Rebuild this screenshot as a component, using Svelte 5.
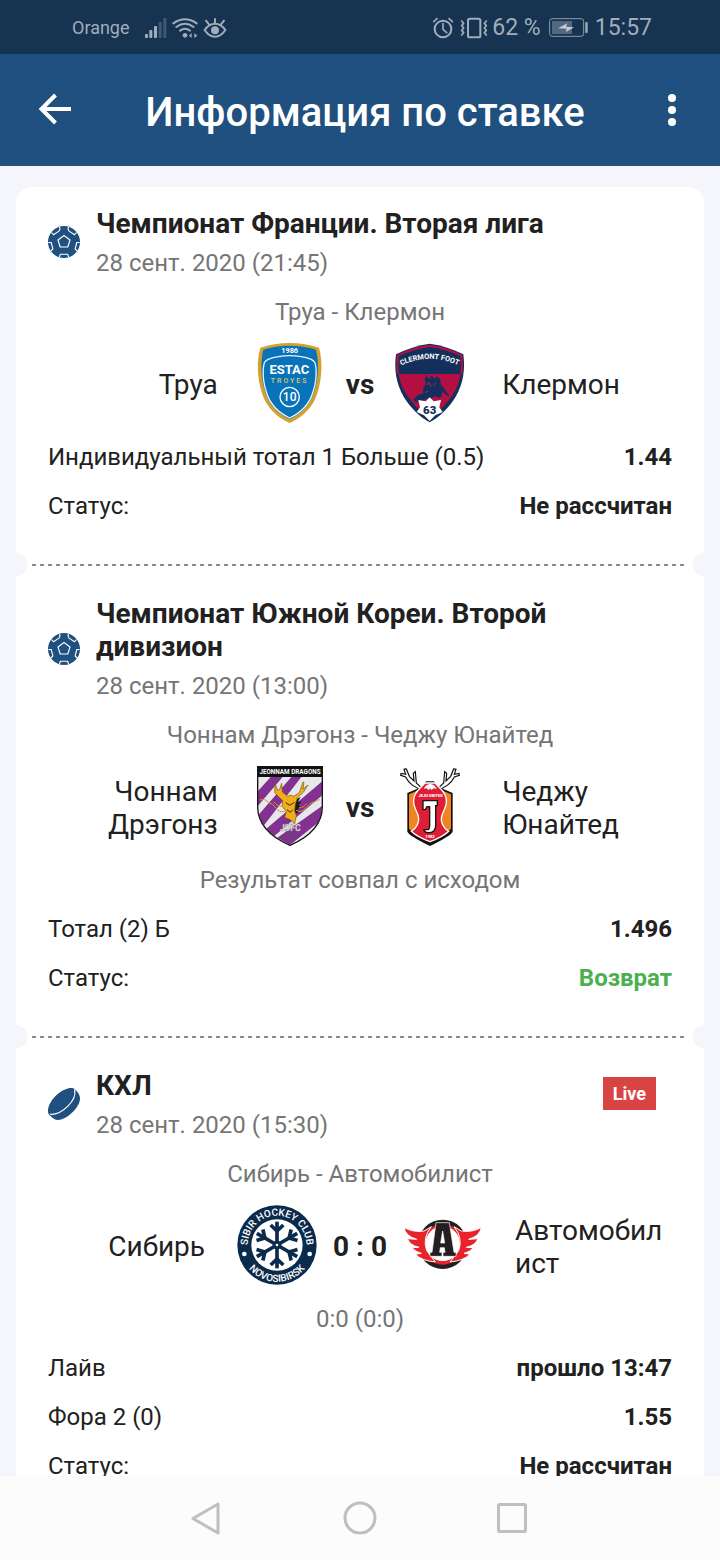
<script>
  const bets = [
    {
      sport: 'football',
      league: 'Чемпионат Франции. Вторая лига',
      date: '28 сент. 2020 (21:45)',
      match: 'Труа - Клермон',
      home: 'Труа',
      away: 'Клермон',
      homeLogo: 'troyes',
      awayLogo: 'clermont',
      score: 'vs',
      rows: [
        { label: 'Индивидуальный тотал 1 Больше (0.5)', value: '1.44' },
        { label: 'Статус:', value: 'Не рассчитан' }
      ]
    },
    {
      sport: 'football',
      league: 'Чемпионат Южной Кореи. Второй дивизион',
      date: '28 сент. 2020 (13:00)',
      match: 'Чоннам Дрэгонз - Чеджу Юнайтед',
      home: 'Чоннам Дрэгонз',
      away: 'Чеджу Юнайтед',
      homeLogo: 'jeonnam',
      awayLogo: 'jeju',
      score: 'vs',
      note: 'Результат совпал с исходом',
      rows: [
        { label: 'Тотал (2) Б', value: '1.496' },
        { label: 'Статус:', value: 'Возврат', good: true }
      ]
    },
    {
      sport: 'hockey',
      live: true,
      league: 'КХЛ',
      date: '28 сент. 2020 (15:30)',
      match: 'Сибирь - Автомобилист',
      home: 'Сибирь',
      away: 'Автомобилист',
      homeLogo: 'sibir',
      awayLogo: 'avto',
      score: '0 : 0',
      note: '0:0 (0:0)',
      rows: [
        { label: 'Лайв', value: 'прошло 13:47' },
        { label: 'Фора 2 (0)', value: '1.55' },
        { label: 'Статус:', value: 'Не рассчитан' }
      ]
    }
  ];
</script>

{#snippet sportIcon(kind)}
  {#if kind === 'football'}
    <svg class="sport" viewBox="0 0 32 32" aria-hidden="true">
      <circle cx="16" cy="16" r="16" fill="#20507f" />
      <g fill="none" stroke="#fff" stroke-width="1.1" stroke-linejoin="round">
        <path d="M16 9.5l6 4.5-2.200 7h-7.600L10 14z" />
        <path d="M3.500 6.500l2 2.200 5.500-3.600 1-2.600-.6-1.600" />
        <path d="M28.500 6.500l-2 2.200-5.500-3.600-1-2.600.6-1.600" />
        <path d="M.4 16.500h2.800l1.700 6.500-2.200 2" />
        <path d="M31.600 16.500h-2.800l-1.700 6.500 2.200 2" />
        <path d="M11.500 31.200l.8-3h7.400l.8 3" />
      </g>
    </svg>
  {:else}
    <svg class="sport" viewBox="0 0 32 32" aria-hidden="true">
      <path d="M20 0.500c3-.8 6-.6 7.500 1.500 2.500 2 4.500 5 4.500 8.500C32 20 18 32 10 32 7 32 4.500 30 2.500 28 .8 26.500 0 25 0 23.500 0 13.500 11 2.500 20 .5z" fill="#20507f" />
      <path d="M26.500 1.500C29.500 12 14 27 2.200 26.300" fill="none" stroke="#fff" stroke-width="1.200" />
    </svg>
  {/if}
{/snippet}

{#snippet logo(kind)}
  {#if kind === 'troyes'}
    <svg class="logo" viewBox="30 39 240 240" role="img" aria-label="ESTAC Troyes">
      <path d="M149 39c-30 0-62 5-88 14-11 38-10 91 5 137 10 37 42 72 83 89 41-17 73-52 83-89 15-46 16-99 5-137-26-9-58-14-88-14z" fill="#d4a12c" />
      <path d="M149 47c-28 0-56 4-79 12-9 36-8 84 5 125 10 37 37 67 74 84 37-17 64-47 74-84 13-41 14-89 5-125-23-8-51-12-79-12z" fill="#0873b9" />
      <path d="M149 77c-24 0-46 4-65 11-12 7-12 11-14 27-2 26 2 50 9 71 10 34 36 62 70 78 34-16 60-44 70-78 7-21 11-45 9-71-2-16-2-20-14-27-19-7-41-11-65-11z" fill="#0873b9" stroke="#e8f5fc" stroke-width="4" />
      <text x="149" y="69" font-size="22" font-weight="700" fill="#fff" text-anchor="middle" font-family="Roboto, sans-serif">1986</text>
      <text x="148" y="132" font-size="39" font-weight="700" fill="#fff" text-anchor="middle" font-family="Roboto, sans-serif">ESTAC</text>
      <text x="149" y="159" font-size="21" letter-spacing="6" font-weight="500" fill="#d6cb72" text-anchor="middle" font-family="Roboto, sans-serif">TROYES</text>
      <circle cx="149" cy="201" r="29" fill="none" stroke="#fff" stroke-width="4" />
      <text x="149" y="214" font-size="36" font-weight="500" fill="#fff" text-anchor="middle" font-family="Roboto, sans-serif">10</text>
    </svg>
  {:else if kind === 'clermont'}
    <svg class="logo" viewBox="450 39 240 240" role="img" aria-label="Clermont Foot">
      <path d="M569 41c36 5 70 16 101 32 6 45 0 88-23 127-18 30-47 60-78 77-31-17-60-47-78-77-23-39-29-82-23-127 31-16 65-27 101-32z" fill="#13305c" />
      <path d="M569 44c36 5 68 15 98 31 2 20 2 38 0 57H471c-2-19-2-37 0-57 30-16 62-26 98-31z" fill="#b40f42" />
      <path d="M569 51c33 5 64 13 92 28 2 18 2 35 0 53H477c-2-18-2-35 0-53 28-15 59-23 92-28z" fill="#13305c" />
      <path d="M476 132h186c-5 31-18 57-36 79-16 21-35 40-57 55-22-15-41-34-57-55-18-22-31-48-36-79z" fill="#b40f42" />
      <path d="M519 209l16-15 15-4-1-14 8-14-3-16 6-6 10 8 6-10 9 9 4-9 11 8 3 19 8 8 17 30-21-19-3 16-8 4-11-7-12 9-16 1-10 7-14-2-4 6z" fill="#13305c" />
      <path d="M562 150l-4-15M576 148l-4-10M598 165l28 31" fill="none" stroke="#13305c" stroke-width="4" />
      <path d="M560 164l8-6 5 12M582 166l5-8M556 187l10-3" fill="none" stroke="#a9284f" stroke-width="3" />
      <path d="M569 202l12 12 22-4-5 22 10 14-22 10-17 17-17-17-22-10 10-14-5-22 22 4z" fill="#fff" />
      <path id="clermont-arc" d="M483 107q84-40 172-1" fill="none" />
      <text font-size="22" font-weight="700" fill="#fff" font-family="Roboto, sans-serif"><textPath href="#clermont-arc" startOffset="50%" text-anchor="middle">CLERMONT FOOT</textPath></text>
      <text x="569" y="252" font-size="34" font-weight="900" fill="#13305c" text-anchor="middle" font-family="Roboto, sans-serif">63</text>
    </svg>
  {:else if kind === 'jeonnam'}
    <svg class="logo" viewBox="30 33 240 240" role="img" aria-label="Jeonnam Dragons">
      <clipPath id="jeonnam-shield"><path d="M54 35h192v120q0 72-96 114-96-42-96-114z" /></clipPath>
      <g clip-path="url(#jeonnam-shield)">
        <path fill="#e6e8eb" d="M50 30h200v245H50z" />
        <path fill="#843092" d="M128 66H92l-45 50v44zM184 66h-30L50 186l18 30zM250 76L78 222l24 22L250 118zM250 150L112 248l38 22 100-80z" />
        <path fill="#111" d="M50 30h200v36H50z" />
      </g>
      <path d="M53 34h194v121q0 73-97 116-97-43-97-116z" fill="none" stroke="#151515" stroke-width="4" />
      <path d="M158 138l24-12-8 14 10 0-9 11 9 4-12 8 4 9-18 8z" fill="#181818" />
      <path d="M151 194l-17-7 5-17-13-17 2-16-24-24 1-28 8 21 6-3 6-18 2 26 16 13 9-4 9 4 17-11 11-32 3 1-3 20 15-12-14 22-17 15-7 20-2 20 5 15-5 24z" fill="#f0ae19" stroke="#785215" stroke-width="2" />
      <path d="M134 169c-23 8-30-24-46-25-10-9-18-14-28-9M168 166c24 14 31-18 48-23 12-3 14-8 23-9M128 154c-17 1-22-10-27-14M177 158c15-1 17-7 23-12" fill="none" stroke="#d99a1a" stroke-width="3" />
      <path d="M137 143l13 8 13-9M141 164l9 8 8-7" fill="none" stroke="#38250b" stroke-width="3" />
      <text x="150" y="57" font-size="19" font-weight="700" fill="#fff" text-anchor="middle" font-family="Roboto, sans-serif">JEONNAM DRAGONS</text>
      <text x="151" y="229" font-size="26" font-weight="700" fill="#fff" stroke="#777" stroke-width="1" text-anchor="middle" font-family="Roboto, sans-serif">JDFC</text>
      <text x="150" y="250" font-size="14" font-weight="700" fill="#555" text-anchor="middle" font-family="Roboto, sans-serif">1994</text>
    </svg>
  {:else if kind === 'jeju'}
    <svg class="logo" viewBox="450 33 240 240" role="img" aria-label="Jeju United">
      <path d="M551 105c-26-4-46-22-54-39l-15-5 1-6 14 3-5-15 7-1 9 22 14 14-2-23 6-5 3 34 17 16zM589 105c26-4 46-22 54-39l15-5-1-6-14 3 5-15-7-1-9 22-14 14 2-23-6-5-3 34-17 16z" fill="#fff" stroke="#111" stroke-width="3.500" />
      <path d="M558 79h24l12 16 44 19v116q-5 12-68 43-63-31-68-43V114l44-19z" fill="#111" />
      <path d="M507 118l34-15h58l34 15v102q-4 12-63 38-59-26-63-38z" fill="#f08423" />
      <path d="M555 84h30l14 14c32 30 19 56 9 77-12 26 6 48 18 54-11 11-31 22-56 31-25-9-45-20-56-31 12-6 30-28 18-54-10-21-23-47 9-77z" fill="#df1d35" stroke="#fff" stroke-width="4" />
      <path d="M551 101l8-10 11-5 11 4 10 11-10-1-6 5-5-5-5 6-4-6z" fill="#fff" />
      <path d="M549 137h43v15h-5v59q0 24-25 22-9-1-10-9h11q6 0 6-14v-55h-8l-5 9h-7z" fill="#fff" stroke="#151515" stroke-width="4" />
      <text x="572" y="126" font-size="12" font-weight="900" fill="#fff" text-anchor="middle" font-family="Roboto, sans-serif">JEJU UNITED</text>
      <text x="570" y="249" font-size="12" font-weight="900" fill="#fff" text-anchor="middle" font-family="Roboto, sans-serif">1982</text>
    </svg>
  {:else if kind === 'sibir'}
    <svg class="logo" viewBox="36 30 240 240" role="img" aria-label="Sibir Hockey Club Novosibirsk">
      <circle cx="156" cy="150" r="119" fill="#0b2b4c" />
      <circle cx="156" cy="150" r="77" fill="#fff" />
      <g stroke="#0b2b4c" fill="none">
        {#each [0, 60, 120, 180, 240, 300] as angle}
          <g transform={`rotate(${angle} 156 150)`}>
            <path d="M156 144V80" stroke-width="11" />
            <path d="M137 90l19 18 19-18" stroke-width="11" />
          </g>
        {/each}
      </g>
      <path d="M156 135l13 7.500v15L156 165l-13-7.500v-15z" fill="#0b2b4c" />
      <circle cx="156" cy="150" r="4" fill="#fff" />
      <circle cx="58" cy="177" r="7" fill="#fff" />
      <circle cx="254" cy="177" r="7" fill="#fff" />
      <path id="sibir-top" d="M71 173a88 88 0 1 1 170 0" fill="none" />
      <path id="sibir-bottom" d="M50 180a110 110 0 0 0 212 0" fill="none" />
      <g font-size="30" font-weight="500" fill="#fff" font-family="Roboto, sans-serif">
        <text><textPath href="#sibir-top" startOffset="50%" text-anchor="middle">SIBIR HOCKEY CLUB</textPath></text>
        <text><textPath href="#sibir-bottom" startOffset="50%" text-anchor="middle">NOVOSIBIRSK</textPath></text>
      </g>
    </svg>
  {:else}
    <svg class="logo" viewBox="9 -21 240 240" role="img" aria-label="Автомобилист">
      <circle cx="128" cy="97" r="74" fill="#231f20" />
      <circle cx="128" cy="97" r="61" fill="#e8232b" />
      <circle cx="128" cy="95" r="52" fill="#fff" />
      <g fill="#e8232b" stroke="#fff" stroke-width="3">
        <path id="avto-wing" d="M12 46Q38 62 72 57L94 44Q66 78 80 116L106 150Q64 146 46 127L64 124Q46 120 36 107L57 106Q30 100 22 80L50 82Q16 72 12 46z" />
        <use href="#avto-wing" transform="translate(256 0) scale(-1 1)" />
      </g>
      <path d="M108 32h40l14 89h6v12h-39v-12h6l-2-14h-12l-2 14h7v12H90v-12h6zM128 57l-6 36h12z" fill="#231f20" fill-rule="evenodd" stroke="#fff" stroke-width="2" />
    </svg>
  {/if}
{/snippet}

<div class="screen">
  <div class="status-bar">
    <div class="status-group left">
      <span class="carrier">Orange</span>
      <svg width="84" height="24" viewBox="252 45 252 72" aria-hidden="true">
        <g fill="#a2adb9">
          <rect x="255" y="99" width="9" height="12" rx="2" />
          <rect x="268" y="87" width="9" height="24" rx="2" />
          <rect x="282" y="75" width="9" height="36" rx="2" />
          <g opacity=".3"><rect x="296" y="63" width="9" height="48" rx="2" /><rect x="310" y="51" width="9" height="60" rx="2" /></g>
          <circle cx="375" cy="103" r="7" />
          <path d="M395 96v15l-8-7zM403 96v15l9-7z" />
          <circle cx="465" cy="88" r="12" />
        </g>
        <g fill="none" stroke="#a2adb9" stroke-width="6" stroke-linecap="round">
          <path d="M340 67q35-24 70 0M349 78q26-19 52 0M360 89q15-11 30 0" />
          <path d="M434 87q13-19 31-19t31 19q-13 20-31 20t-31-20zM465 66V54M447 70l-9-11M483 70l9-11" />
        </g>
      </svg>
    </div>
    <div class="status-group">
      <svg width="56" height="24" viewBox="42 45 168 72" aria-hidden="true">
        <g fill="none" stroke="#a2adb9" stroke-width="5" stroke-linecap="round" stroke-linejoin="round">
          <circle cx="75" cy="84" r="25" stroke-width="6" />
          <path d="M47 62l10-9M103 62l-10-9M75 68v17l11 10" />
          <rect x="150" y="53" width="37" height="56" rx="5" stroke-width="6" />
          <path d="M131 60l6 7-6 7 6 7-6 7 6 7-6 7M205 60l-6 7 6 7-6 7 6 7-6 7 6 7" />
        </g>
      </svg>
      <span>62 %</span>
      <svg class="battery" width="40" height="20" viewBox="384 54 120 60" aria-hidden="true">
        <rect x="386" y="56" width="102" height="53" rx="8" fill="none" stroke="#8d9baa" stroke-width="3" />
        <rect x="393" y="63" width="60" height="39" fill="#52687f" />
        <path d="M411 85l28-15-4 10 24 2-24 14 2-10z" fill="#c4cbd3" />
        <rect x="493" y="66" width="7" height="33" rx="3" fill="#a2adb9" />
      </svg>
      <span>15:57</span>
    </div>
  </div>

  <header>
    <button class="icon-button" aria-label="Назад">
      <svg width="40" height="40" viewBox="0 0 40 40" aria-hidden="true"><path d="M37 19H7M21.500 5l-14 14 14 14" fill="none" stroke="#fff" stroke-width="4" /></svg>
    </button>
    <h1>Информация по ставке</h1>
    <button class="icon-button" aria-label="Меню">
      <svg width="40" height="40" viewBox="0 0 40 40" aria-hidden="true"><g fill="#fff"><circle cx="20" cy="8" r="4" /><circle cx="20" cy="20" r="4" /><circle cx="20" cy="32" r="4" /></g></svg>
    </button>
  </header>

  <main>
    <div class="ticket">
      {#each bets as bet}
        <section>
          <div class="heading">
            {@render sportIcon(bet.sport)}
            <div class="heading-text">
              <h2>{bet.league}</h2>
              <p class="muted">{bet.date}</p>
            </div>
            {#if bet.live}<span class="live">Live</span>{/if}
          </div>
          <p class="match muted">{bet.match}</p>
          <div class="teams">
            <span class="team home">{bet.home}</span>
            {@render logo(bet.homeLogo)}
            <strong class="score">{bet.score}</strong>
            {@render logo(bet.awayLogo)}
            <span class="team">{bet.away}</span>
          </div>
          {#if bet.note}<p class="note muted">{bet.note}</p>{/if}
          <dl>
            {#each bet.rows as row}
              <div class="row">
                <dt>{row.label}</dt>
                <dd class:good={row.good}>{row.value}</dd>
              </div>
            {/each}
          </dl>
        </section>
      {/each}
    </div>
  </main>

  <nav>
    <button aria-label="Назад"><svg width="36" height="36" viewBox="0 0 36 36" aria-hidden="true"><path d="M28 4v29L3 18.500z" /></svg></button>
    <button aria-label="Домой"><svg width="36" height="36" viewBox="0 0 36 36" aria-hidden="true"><circle cx="18" cy="18" r="15" /></svg></button>
    <button aria-label="Недавние"><svg width="36" height="36" viewBox="0 0 36 36" aria-hidden="true"><rect x="4.500" y="4.500" width="27" height="27" rx="1" /></svg></button>
  </nav>
</div>

<style>
  :global(body) {
    margin: 0;
    background: #f4f6fb;
  }
  .screen {
    display: flex;
    flex-direction: column;
    height: 100vh;
    font-family: Roboto, sans-serif;
    font-size: 24px;
    line-height: 28px;
    color: #212121;
  }
  h1, h2, p, dl, dd {
    margin: 0;
  }
  button {
    display: flex;
    align-items: center;
    justify-content: center;
    padding: 0;
    border: 0;
    background: none;
    cursor: pointer;
  }
  .status-bar {
    display: flex;
    box-sizing: border-box;
    flex: none;
    align-items: center;
    justify-content: space-between;
    height: 54px;
    padding: 2px 68px 0 72px;
    background: #163351;
    color: #a2adb9;
    font-size: 23px;
  }
  .status-group {
    display: flex;
    align-items: center;
    gap: 4px;
  }
  .status-group.left {
    gap: 14px;
  }
  .battery {
    margin: 0 2px 0 4px;
  }
  .carrier {
    font-size: 18px;
  }
  header {
    display: flex;
    flex: none;
    align-items: center;
    height: 112px;
    padding: 0 16px;
    background: #20507f;
    color: #fff;
  }
  .icon-button {
    width: 64px;
    height: 80px;
  }
  .icon-button:first-child {
    margin-left: 6px;
  }
  h1 {
    flex: 1;
    padding: 6px 0 0 4px;
    text-align: center;
    font-size: 40px;
    line-height: 48px;
    font-weight: 500;
  }
  main {
    flex: 1;
    min-height: 0;
    overflow-y: auto;
    scrollbar-width: none;
    padding: 21px 16px 0;
  }
  .ticket {
    background: #fff;
    border-radius: 16px;
  }
  section {
    position: relative;
    padding: 32px 32px 45px;
  }
  section:first-child {
    padding-top: 20px;
  }
  section + section::before {
    content: '';
    position: absolute;
    top: -1px;
    left: 16px;
    right: 20px;
    height: 2px;
    background: repeating-linear-gradient(90deg, #8c8c8c 0 4px, transparent 4px 8px);
  }
  section + section::after {
    content: '';
    position: absolute;
    top: -12px;
    left: 0;
    right: 0;
    height: 24px;
    background:
      radial-gradient(circle at 0 12px, #f4f6fb 11px, transparent 12px),
      radial-gradient(circle at 100% 12px, #f4f6fb 11px, transparent 12px);
  }
  .heading {
    display: flex;
    align-items: center;
    gap: 16px;
  }
  .heading-text {
    flex: 1;
  }
  .sport {
    flex: none;
    width: 32px;
    height: 32px;
  }
  h2 {
    margin-bottom: 9px;
    font-size: 28px;
    line-height: 33px;
    font-weight: 700;
  }
  .muted {
    color: #757575;
  }
  .live {
    align-self: flex-start;
    margin: 8px 16px 0 0;
    padding: 1px 10px 0;
    background: #d84444;
    color: #fff;
    font-size: 18px;
    line-height: 32px;
    font-weight: 700;
  }
  .match {
    margin: 21px 0 17px;
    text-align: center;
  }
  .teams {
    display: flex;
    align-items: center;
    font-size: 28px;
    line-height: 33px;
  }
  .team {
    flex: 1 1 0;
    min-width: 0;
    margin-left: 32px;
    padding-top: 3px;
    overflow-wrap: anywhere;
  }
  .team.home {
    margin: 0 32px 0 0;
    text-align: right;
  }
  .logo {
    flex: none;
    width: 80px;
    height: 80px;
  }
  .score {
    padding: 3px 16px 0;
    font-weight: 700;
  }
  .note {
    margin: 20px 0 21px;
    text-align: center;
  }
  dl {
    display: grid;
    gap: 21px;
    margin-top: 20px;
  }
  .row {
    display: flex;
    justify-content: space-between;
    gap: 16px;
  }
  dd {
    font-weight: 700;
    text-align: right;
  }
  .good {
    color: #4caf50;
  }
  nav {
    display: flex;
    flex: none;
    align-items: center;
    justify-content: center;
    gap: 116px;
    height: 84px;
    background: #fcfcfc;
  }
  nav path, nav circle, nav rect {
    fill: none;
    stroke: #bfbfbf;
    stroke-width: 3px;
    stroke-linejoin: round;
  }
</style>
